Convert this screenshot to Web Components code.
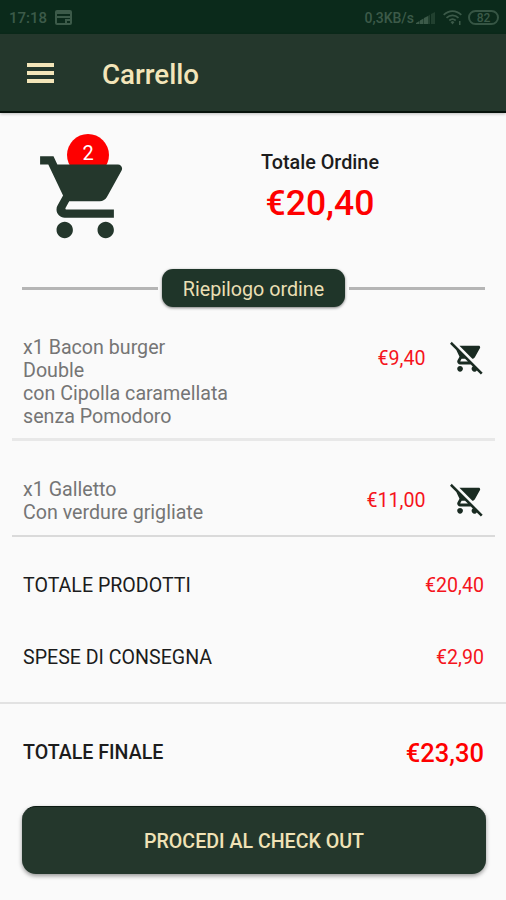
<!DOCTYPE html>
<html lang="it">
<head>
<meta charset="utf-8">
<title>Carrello</title>
<style>
    body {
        margin: 0;
        background: #fafafa;
        font-family: Roboto, "Liberation Sans", sans-serif;
        color: #1c1c1c;
    }
</style>
</head>
<body>
<cart-page></cart-page>

<script>
const CART = 'M7 18c-1.1 0-1.99.9-1.99 2S5.9 22 7 22s2-.9 2-2-.9-2-2-2zM1 2v2h2l3.6 7.59-1.35 2.45c-.16.28-.25.61-.25.96 0 1.1.9 2 2 2h12v-2H7.42c-.14 0-.25-.11-.25-.25l.03-.12.9-1.63h7.45c.75 0 1.41-.41 1.75-1.03l3.58-6.49c.08-.14.12-.31.12-.48 0-.55-.45-1-1-1H5.21l-.94-2H1zm16 16c-1.1 0-1.99.9-1.99 2s.89 2 1.99 2 2-.9 2-2-.9-2-2-2z';
const CART_OFF = 'M22.73 22.73L2.77 2.77 2 2l-.73-.73L0 2.54l4.39 4.39 2.21 4.66-1.35 2.45c-.16.28-.25.61-.25.96 0 1.1.9 2 2 2h7.46l1.38 1.38c-.5.36-.83.95-.83 1.62 0 1.1.89 2 1.99 2 .67 0 1.26-.33 1.62-.84L21.46 24l1.27-1.27zM7.42 15c-.14 0-.25-.11-.25-.25l.03-.12.9-1.63h2.36l2 2H7.42zm8.13-2c.75 0 1.41-.41 1.75-1.03l3.58-6.49c.08-.14.12-.31.12-.48 0-.55-.45-1-1-1H6.54l9.01 9zM7 18c-1.1 0-1.99.9-1.99 2S5.9 22 7 22s2-.9 2-2-.9-2-2-2z';

class BaseElement extends HTMLElement {
    constructor() {
        super();
        this.attachShadow({ mode: 'open' });
    }

    connectedCallback() {
        this.shadowRoot.innerHTML = this.template();
    }
}

class StatusBar extends BaseElement {
    template() {
        return `
            <style>
                :host {
                    display: flex;
                    align-items: center;
                    height: 34px;
                    box-sizing: border-box;
                    padding: 1px 7px 0 9px;
                    background: #0b2a1b;
                    color: #3c5a49;
                    font-size: 15px;
                    font-weight: 500;
                }
                svg { display: block; }
                .news { margin-left: 8px; }
                .speed { margin-left: auto; font-size: 14px; }
                .signal { margin-left: 2px; }
                .wifi { margin-left: 7px; }
                .battery {
                    margin-left: 6px;
                    width: 31px;
                    height: 15px;
                    box-sizing: border-box;
                    border: 2px solid #365544;
                    border-radius: 8px;
                    font-size: 12px;
                    line-height: 12px;
                    text-align: center;
                }
            </style>
            <span class="time">17:18</span>
            <svg class="news" width="17" height="15" viewBox="0 0 17 15">
                <path fill="#3c5a49" fill-rule="evenodd" d="M2 0h13a2 2 0 0 1 2 2v11a2 2 0 0 1-2 2H2a2 2 0 0 1-2-2V2a2 2 0 0 1 2-2zM2 4v2h13V4zM2 8v5h8V9h5V8zM12 11v2h3v-2z"/>
            </svg>
            <span class="speed">0,3KB/s</span>
            <svg class="signal" width="20" height="12" viewBox="0 0 20 12" fill="#3c5a49">
                <path d="M0 12v-1l3.500-2v3zM4 12V8.500l3.500-2V12zM8 12V6l4-2v8z"/>
                <path d="M12 12V4l2-1.500V12zM15 12V2l4-2v12z" opacity=".45"/>
            </svg>
            <svg class="wifi" width="19" height="15" viewBox="0 0 19 15" fill="none" stroke="#3c5a49" stroke-width="1.800">
                <path d="M.7 4.800C6-.2 13-.2 18.300 4.800M3.500 7.800c3.500-3.200 8.500-3.200 12 0M6.300 10.500c2-1.700 4.400-1.700 6.400 0"/>
                <path fill="#3c5a49" stroke="none" d="M7.500 12l2-1 2 1-2 2.500zM16 11h1.500v4H16z"/>
            </svg>
            <span class="battery">82</span>
        `;
    }
}

class AppBar extends BaseElement {
    template() {
        return `
            <style>
                :host {
                    display: flex;
                    align-items: center;
                    gap: 48px;
                    height: 79px;
                    box-sizing: border-box;
                    padding: 4px 27px 0;
                    background: #24372c;
                    border-bottom: 2px solid #06120b;
                    box-shadow: 0 1px 3px rgba(0, 0, 0, .25);
                    color: #f3e5b9;
                    font-size: 27.700px;
                    font-weight: 500;
                }
                .menu {
                    display: grid;
                    gap: 4px;
                    width: 27px;
                    margin-top: -3px;
                }
                .menu i { height: 4px; background: #f3e5b9; }
            </style>
            <div class="menu"><i></i><i></i><i></i></div>
            <slot></slot>
        `;
    }
}

class CartBadge extends BaseElement {
    template() {
        return `
            <style>
                :host {
                    display: block;
                    position: relative;
                    width: 98px;
                    height: 98px;
                }
                svg { display: block; position: relative; }
                .count {
                    position: absolute;
                    left: 31px;
                    top: -14px;
                    width: 42px;
                    height: 42px;
                    border-radius: 50%;
                    background: #fe0000;
                    color: #fff;
                    font-size: 20px;
                    line-height: 38px;
                    text-align: center;
                }
            </style>
            <div class="count"><slot></slot></div>
            <svg width="98.400" height="98.400" viewBox="0 0 24 24"><path fill="#24372c" d="${CART}"/></svg>
        `;
    }
}

class OrderTotal extends BaseElement {
    template() {
        return `
            <style>
                :host {
                    display: flex;
                    justify-content: space-between;
                    height: 156px;
                    box-sizing: border-box;
                    padding: 35px 66px 0 36px;
                }
                .total {
                    width: 240px;
                    padding-top: 3px;
                    text-align: center;
                    font-weight: 500;
                }
                .label { font-size: 19.800px; line-height: 24px; }
                .price { font-size: 35.500px; line-height: 42px; margin-top: 7px; color: #fe0000; }
            </style>
            <cart-badge>${this.getAttribute('count')}</cart-badge>
            <div class="total">
                <div class="label">Totale Ordine</div>
                <div class="price">${this.getAttribute('price')}</div>
            </div>
        `;
    }
}

class SectionTitle extends BaseElement {
    template() {
        return `
            <style>
                :host {
                    display: flex;
                    align-items: center;
                    gap: 4px;
                    padding: 0 21px 0 22px;
                }
                hr { flex: 1; height: 3px; margin: 0; border: 0; background: #b5b5b5; }
                .pill {
                    width: 183px;
                    height: 38px;
                    border-radius: 11px;
                    background: #1f3529;
                    box-shadow: 0 1px 3px rgba(0, 0, 0, .5);
                    color: #eadfb4;
                    font-size: 19.700px;
                    line-height: 41px;
                    text-align: center;
                }
            </style>
            <hr><div class="pill"><slot></slot></div><hr>
        `;
    }
}

class CartItem extends BaseElement {
    template() {
        return `
            <style>
                :host {
                    display: flex;
                    align-items: flex-start;
                    box-sizing: border-box;
                    margin: 0 11px 0 12px;
                    padding: 0 11px 0 11px;
                    border-bottom: 3px solid #e8e8e8;
                    font-size: 19.650px;
                    line-height: 23px;
                }
                .text { flex: 1; white-space: pre-line; color: #757575; }
                .price { margin: 11px 24px 0 0; color: #f5141c; }
                svg { display: block; margin-top: 4px; }
            </style>
            <div class="text"><slot></slot></div>
            <div class="price">${this.getAttribute('price')}</div>
            <svg width="34.500" height="34.500" viewBox="0 0 24 24"><path fill="#1a2b22" d="${CART_OFF}"/></svg>
        `;
    }
}

class SummaryRow extends BaseElement {
    template() {
        return `
            <style>
                :host {
                    display: flex;
                    justify-content: space-between;
                    align-items: center;
                    height: 72px;
                    padding: 0 22px 0 23px;
                    font-size: 19.600px;
                }
                .price { color: #f5141c; }
                :host([final]) { font-weight: 500; }
                :host([final]) .price { color: #fe0000; font-size: 25.500px; padding-top: 1px; }
            </style>
            <span><slot></slot></span>
            <span class="price">${this.getAttribute('price')}</span>
        `;
    }
}

class ActionButton extends BaseElement {
    template() {
        return `
            <style>
                :host { display: block; margin: 0 20px 0 22px; }
                button {
                    display: block;
                    width: 100%;
                    height: 68px;
                    padding: 2px 0 0;
                    border: 0;
                    border-top: 1px solid #0b1a12;
                    border-radius: 14px;
                    background: #24372c;
                    box-shadow: 0 2px 4px rgba(0, 0, 0, .4);
                    color: #f0e2b6;
                    font: 500 19.600px Roboto, sans-serif;
                }
            </style>
            <button><slot></slot></button>
        `;
    }
}

class CartPage extends BaseElement {
    template() {
        return `
            <style>
                :host {
                    display: flex;
                    flex-direction: column;
                    height: 900px;
                    overflow: hidden;
                }
                cart-item.first { height: 105px; margin-top: 29px; }
                cart-item.second { height: 59px; margin-top: 37px; border-bottom: 2px solid #dadada; }
                .rows { padding: 12px 0 9px; border-bottom: 2px solid #e2e2e2; }
                summary-row[final] { margin-top: 12px; }
                action-button { margin-top: 18px; }
            </style>
            <status-bar></status-bar>
            <app-bar>Carrello</app-bar>
            <order-total count="2" price="€20,40"></order-total>
            <section-title>Riepilogo ordine</section-title>
            <cart-item class="first" price="€9,40">x1 Bacon burger
Double
con Cipolla caramellata
senza Pomodoro</cart-item>
            <cart-item class="second" price="€11,00">x1 Galletto
Con verdure grigliate</cart-item>
            <div class="rows">
                <summary-row price="€20,40">TOTALE PRODOTTI</summary-row>
                <summary-row price="€2,90">SPESE DI CONSEGNA</summary-row>
            </div>
            <summary-row final price="€23,30">TOTALE FINALE</summary-row>
            <action-button>PROCEDI AL CHECK OUT</action-button>
        `;
    }
}

customElements.define('status-bar', StatusBar);
customElements.define('app-bar', AppBar);
customElements.define('cart-badge', CartBadge);
customElements.define('order-total', OrderTotal);
customElements.define('section-title', SectionTitle);
customElements.define('cart-item', CartItem);
customElements.define('summary-row', SummaryRow);
customElements.define('action-button', ActionButton);
customElements.define('cart-page', CartPage);
</script>
</body>
</html>
